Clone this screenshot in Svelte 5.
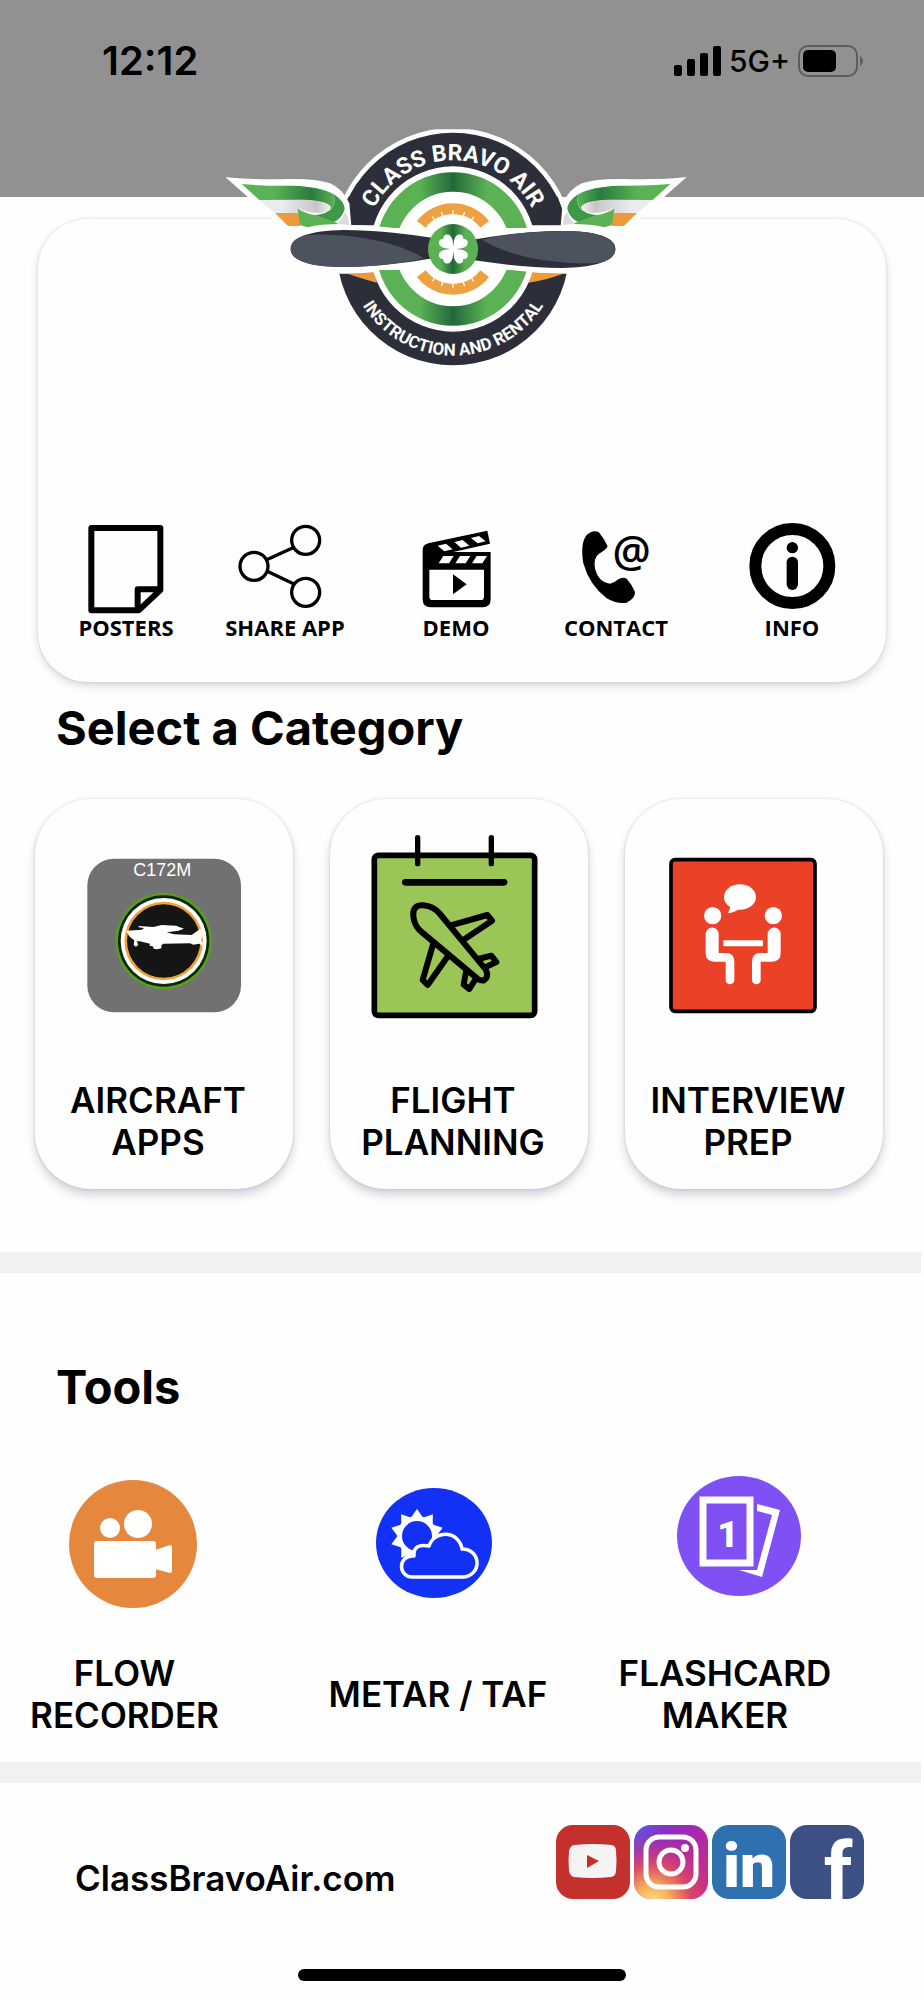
<script lang="ts">
  const website = 'ClassBravoAir.com'
</script>

<header class="status-bar">
  <time class="clock">12:12</time>
  <div class="status-icons">
    <svg width="47" height="30" viewBox="0 0 47 30" aria-hidden="true">
      <rect x="0" y="19" width="8" height="11" rx="2" />
      <rect x="13" y="13" width="8" height="17" rx="2" />
      <rect x="26" y="7" width="8" height="23" rx="2" />
      <rect x="39" y="0" width="8" height="30" rx="2" />
    </svg>
    <span class="network">5G+</span>
    <svg width="66" height="32" viewBox="0 0 66 32" aria-hidden="true">
      <rect x="1" y="1" width="58" height="30" rx="9" fill="none" stroke="#5c5c5c" stroke-width="2" />
      <rect x="5" y="5" width="33" height="22" rx="5" />
      <path d="M62 11q6 5 0 10z" fill="#5c5c5c" />
    </svg>
  </div>
</header>

<main>
  <section class="hero">
    <svg class="logo" viewBox="12 24 1428 720" role="img" aria-label="Class Bravo Air">
      <defs>
        <linearGradient id="ring" x1="0" x2="1">
          <stop offset="0.25" stop-color="#5bb254" />
          <stop offset="0.5" stop-color="#22683a" />
          <stop offset="0.75" stop-color="#5bb254" />
        </linearGradient>
        <linearGradient id="ribbon" x1="0" x2="1">
          <stop offset="0.35" stop-color="#5bb254" />
          <stop offset="0.75" stop-color="#2b7a41" />
          <stop offset="1" stop-color="#5bb254" />
        </linearGradient>
        <linearGradient id="silver" x1="0" x2="1">
          <stop offset="0.3" stop-color="#ececee" />
          <stop offset="0.8" stop-color="#c6c6c9" />
          <stop offset="1" stop-color="#f4f4f4" />
        </linearGradient>
        <clipPath id="top-edge"><rect x="0" y="28" width="1440" height="720" /></clipPath>
        <path id="arc-top" d="M433 387a266 266 0 0 1 532 0" />
        <path id="arc-bottom" d="M379 387a320 320 0 0 0 640 0" />
        <g id="wing">
          <path fill="#fff" d="M16 171Q90 180 210 177Q290 176 330 190Q368 206 388 250L396 340L240 330Q205 330 182 318Z" />
          <path fill="url(#ribbon)" d="M65 192Q140 199 220 197Q300 200 340 222Q350 250 332 268Q314 242 250 239L118 240Z" />
          <path fill="url(#silver)" d="M118 240H260Q325 243 333 262Q326 280 296 279Q262 277 238 266L236 279H165Z" />
          <path fill="#ec9a3c" d="M165 279H240V318H204Z" />
          <path fill="#3f9748" d="M340 221Q375 245 374 268Q365 300 335 308L282 286Q325 282 338 262Q348 245 340 221Z" />
          <path fill="#5bb254" d="M233 266Q258 281 290 286L360 312Q305 312 262 322L240 315Z" />
          <path fill="#dcdcde" d="M374 275Q388 290 387 315L350 311Q370 300 374 275Z" />
        </g>
        <g id="blade">
          <path fill="#2c2f39" d="M640 354C560 342 470 330 370 330C270 332 212 352 212 387C212 425 280 441 370 441C480 440 560 428 640 415Z" />
          <path fill="#4c535f" d="M250 348C300 340 350 344 400 350C500 362 570 388 612 415C550 430 470 440 370 441C280 441 212 425 212 387C212 368 225 356 250 348Z" />
        </g>
      </defs>
      <g clip-path="url(#top-edge)">
        <circle cx="699" cy="387" r="363" fill="#fff" />
        <circle cx="699" cy="387" r="349" fill="#2c2f39" />
      </g>
      <path fill="#fff" d="M330 313H1068V461H330Z" />
      <path fill="#2c2f39" d="M385 230L374 262L390 316H480V230ZM1013 230L1030 280L1023 316H930V230Z" />
      <path fill="#ec9a3c" d="M385 462L470 456V488Q425 476 385 462ZM1027 462L925 456V488Q975 482 1027 462Z" />
      <circle cx="699" cy="387" r="248" fill="#fff" />
      <circle cx="699" cy="387" r="201" fill="none" stroke="url(#ring)" stroke-width="59" />
      <path fill="none" stroke="#eda140" stroke-width="33" d="M604 313A120 120 0 0 1 794 313M604 461A120 120 0 0 0 794 461" />
      <path stroke="#fff" stroke-width="4" d="M637 290l8 13M664 276l5 14M699 270v14M734 276l-5 14M761 290l-8 13M637 484l8-13M664 498l5-14M699 504v-14M734 498l-5-14M761 484l-8-13" />
      <path fill="#fff" d="M470 324H930V450H470Z" />
      <use href="#wing" />
      <use href="#wing" transform="translate(1416 0) scale(-1 1)" />
      <g fill="none" stroke="#fff" stroke-width="30">
        <path d="M640 354C560 342 470 330 370 330C270 332 212 352 212 387C212 425 280 441 370 441C480 440 560 428 640 415" />
        <path transform="rotate(180 699 387)" d="M640 354C560 342 470 330 370 330C270 332 212 352 212 387C212 425 280 441 370 441C480 440 560 428 640 415" />
      </g>
      <use href="#blade" />
      <use href="#blade" transform="rotate(180 699 387)" />
      <circle cx="699" cy="387" r="75" fill="url(#ring)" />
      <g fill="#fff">
        {#each [45, 135, 225, 315] as angle}
          <path transform="translate(700 387) rotate({angle})" d="M0 2L-17 -20Q-28 -40 -13 -47Q-4 -49 0 -42Q4 -49 13 -47Q28 -40 17 -20Z" />
        {/each}
      </g>
      <text class="logo-name"><textPath href="#arc-top" startOffset="50%">CLASS BRAVO AIR</textPath></text>
      <text class="logo-sub"><textPath href="#arc-bottom" startOffset="50%">INSTRUCTION AND RENTAL</textPath></text>
    </svg>

    <nav class="shortcuts">
      <a href="#posters">
        <svg viewBox="54 69 288 270" aria-hidden="true">
          <path fill="none" stroke="#000" stroke-width="18" stroke-linejoin="round" d="M94 84H301V270L236 331H94ZM301 268H233V331" />
        </svg>
        POSTERS
      </a>
      <a href="#share">
        <svg viewBox="531 69 288 270" aria-hidden="true">
          <g fill="none" stroke="#000" stroke-width="10">
            <circle cx="582" cy="199" r="42" />
            <circle cx="737" cy="121" r="42" />
            <circle cx="737" cy="277" r="42" />
            <path d="M620 179L699 143M620 213L702 252" />
          </g>
        </svg>
        SHARE APP
      </a>
      <a href="#demo">
        <svg viewBox="1044 69 288 270" aria-hidden="true">
          <path d="M1088 150Q1088 134 1105 130L1282 92L1290 131L1180 156H1292V298Q1292 322 1268 322H1112Q1088 322 1088 298Z" />
          <g fill="#fff">
            <path d="M1108 209H1272V290Q1272 300 1262 300H1118Q1108 300 1108 290Z" />
            <path d="M1150 168H1181L1167 190H1136ZM1200 168H1231L1217 190H1186ZM1250 168H1281L1267 190H1236Z" />
            <path d="M1133 137L1158 131L1178 148L1153 154ZM1183 126L1208 120L1228 137L1203 143ZM1233 114L1257 108L1277 124L1253 130Z" />
          </g>
          <path d="M1179 223V283L1220 253Z" />
        </svg>
        DEMO
      </a>
      <a href="#contact">
        <svg viewBox="324 69 288 270" aria-hidden="true">
          <path d="M380 105Q398 88 416 96Q433 116 443 139Q440 148 416 162Q400 174 405 205Q414 246 450 251Q462 249 475 238Q488 230 500 236Q515 252 525 276Q526 294 500 308Q470 313 440 295Q388 255 370 190Q360 130 380 105Z" />
          <text class="at-sign" x="515" y="201">@</text>
        </svg>
        CONTACT
      </a>
      <a href="#info">
        <svg viewBox="852 69 288 270" aria-hidden="true">
          <circle cx="997" cy="198" r="111" fill="none" stroke="#000" stroke-width="36" />
          <circle cx="997" cy="143" r="17" />
          <rect x="980" y="170" width="34" height="100" rx="17" />
        </svg>
        INFO
      </a>
    </nav>
  </section>

  <h2>Select a Category</h2>
  <div class="categories">
    <button class="card">
      <svg viewBox="159 165 510 552" aria-hidden="true">
        <rect x="202" y="236" width="461" height="461" rx="80" fill="#717171" />
        <text class="model" x="427" y="288">C172M</text>
        <circle cx="431" cy="483" r="145" fill="#5e9926" />
        <circle cx="431" cy="483" r="137" fill="#0a2a0c" />
        <circle cx="431" cy="483" r="129" fill="#fff" />
        <circle cx="431" cy="483" r="118" fill="#f3a136" />
        <circle cx="431" cy="483" r="110" fill="#151515" />
        <path fill="#fff" d="M319 452L366 449L372 444L356 442V438L400 441L425 435L468 437L492 446L475 452L440 457L462 463L515 465L540 447L554 445L547 462L543 484L554 490L552 498L538 491L520 494L510 490L430 491L424 496V505L412 508L402 507L398 499L388 497L390 491L360 484L350 484L355 494L348 500L341 495L343 481Q325 470 319 452Z" />
      </svg>
      <span>AIRCRAFT<br />APPS</span>
    </button>
    <button class="card">
      <svg viewBox="144 165 510 552" aria-hidden="true">
        <rect x="163" y="226" width="481" height="480" rx="12" fill="#9bc557" stroke="#000" stroke-width="17" />
        <g fill="none" stroke="#000" stroke-linecap="round" stroke-linejoin="round">
          <path stroke-width="16" d="M293 173V251M514 173V251" />
          <path stroke-width="20" d="M256 307H552" />
          <path stroke-width="18" d="M280 408Q277 374 310 376Q340 378 360 402L497 568Q508 590 492 601Q484 604 472 596L300 452Q282 434 280 408ZM392 436L502 405L516 422L430 480M340 490L308 600L323 615L384 528M475 537L514 527L529 546L500 560M438 575L431 614L448 627L465 600" />
        </g>
      </svg>
      <span>FLIGHT<br />PLANNING</span>
    </button>
    <button class="card">
      <svg viewBox="159 165 510 552" aria-hidden="true">
        <rect x="183" y="239" width="432" height="455" rx="12" fill="#ea4127" stroke="#000" stroke-width="11" />
        <g fill="#fff">
          <ellipse cx="390" cy="351" rx="48" ry="38" />
          <path d="M361 374Q362 388 353 400Q374 399 390 385Z" />
          <rect x="340" y="481" width="119" height="18" rx="3" />
          <circle cx="308" cy="407" r="26" />
          <circle cx="490" cy="407" r="26" />
          <path d="M287 462a19 19 0 0 1 39 0V519H348Q373 519 373 545V600a13 13 0 0 1-26 0V545H312Q287 545 287 520Z" />
          <path d="M512 462a19 19 0 0 0-39 0V519H451Q426 519 426 545V600a13 13 0 0 0 26 0V545H487Q512 545 512 520Z" />
        </g>
      </svg>
      <span>INTERVIEW<br />PREP</span>
    </button>
  </div>

  <hr />

  <h2 class="tools-title">Tools</h2>
  <div class="tools">
    <button class="tool">
      <svg viewBox="47 1475 156 134" aria-hidden="true">
        <circle cx="133" cy="1544" r="64" fill="#e5873d" />
        <g fill="#fff">
          <circle cx="110" cy="1528" r="10" />
          <circle cx="138" cy="1524" r="14" />
          <rect x="94" y="1541" width="62" height="37" rx="3" />
          <path d="M155 1550L170 1545Q172 1545 172 1547V1571Q172 1573 170 1573L155 1569Z" />
        </g>
      </svg>
      <span>FLOW<br />RECORDER</span>
    </button>
    <button class="tool middle">
      <svg viewBox="360 1475 156 134" aria-hidden="true">
        <ellipse cx="434" cy="1543" rx="58" ry="55" fill="#1330f5" />
        <g fill="#fff">
          <circle cx="417" cy="1536" r="20" />
          {#each [0, 36, 72, 108, 144, 180, 216, 252, 288, 324] as angle}
            <path transform="rotate({angle} 417 1536)" d="M410 1519L417 1509L424 1519Z" />
          {/each}
        </g>
        <circle cx="417" cy="1536" r="15" fill="#1330f5" />
        <path fill="#1330f5" stroke="#fff" stroke-width="3.5" stroke-linejoin="round" d="M412 1577A10 10 0 0 1 412 1556H414Q413 1543 429 1546A17 17 0 0 1 462 1549A14 14 0 1 1 464 1577Z" />
      </svg>
      <span>METAR / TAF</span>
    </button>
    <button class="tool">
      <svg viewBox="647 1475 156 134" aria-hidden="true">
        <ellipse cx="739" cy="1536" rx="62" ry="60" fill="#7f50f4" />
        <rect x="703" y="1500" width="47" height="63" fill="none" stroke="#fff" stroke-width="7" />
        <path fill="#fff" d="M757 1504L780 1510L762 1577L739 1570L757 1570L772 1515L757 1511Z" />
        <text class="card-number" x="728" y="1547">1</text>
      </svg>
      <span>FLASHCARD<br />MAKER</span>
    </button>
  </div>

  <hr />
</main>

<footer>
  <div class="footer-row">
    <a class="website" href="https://classbravoair.com">{website}</a>
    <div class="social">
      <a href="#youtube" aria-label="YouTube">
        <svg viewBox="0 0 74 74">
          <rect width="74" height="74" rx="17" fill="#c4302b" />
          <path fill="#f4f4f4" d="M18 20Q37 18 56 20Q60 21 60 26Q61 36 60 46Q60 51 55 52Q37 54 18 52Q14 51 13 46Q12 36 13 26Q14 21 18 20Z" />
          <path fill="#c4302b" d="M31 30V43L43 36Z" />
        </svg>
      </a>
      <a href="#instagram" aria-label="Instagram">
        <svg viewBox="0 0 74 74">
          <defs>
            <linearGradient id="ig-base" x1="0" y1="0" x2="1" y2="0.6">
              <stop offset="0" stop-color="#5a5ae0" />
              <stop offset="0.35" stop-color="#8a2fc0" />
              <stop offset="0.6" stop-color="#a328b4" />
              <stop offset="1" stop-color="#c42c8c" />
            </linearGradient>
            <radialGradient id="ig-glow" cx="0.25" cy="1.05" r="0.95">
              <stop offset="0" stop-color="#fde08a" />
              <stop offset="0.25" stop-color="#f5b05a" />
              <stop offset="0.55" stop-color="#df4a5e" stop-opacity="0.9" />
              <stop offset="1" stop-color="#c42c8c" stop-opacity="0" />
            </radialGradient>
          </defs>
          <rect width="74" height="74" rx="17" fill="url(#ig-base)" />
          <rect width="74" height="74" rx="17" fill="url(#ig-glow)" />
          <g fill="none" stroke="#fff" stroke-width="5">
            <rect x="12" y="12" width="50" height="50" rx="13" />
            <circle cx="37" cy="37" r="12" />
          </g>
          <circle cx="51" cy="23" r="4" fill="#fff" />
        </svg>
      </a>
      <a href="#linkedin" aria-label="LinkedIn">
        <svg viewBox="0 0 74 74">
          <rect width="74" height="74" rx="17" fill="#2f70af" />
          <text class="linkedin-mark" x="37" y="62">in</text>
        </svg>
      </a>
      <a href="#facebook" aria-label="Facebook">
        <svg viewBox="0 0 74 74">
          <rect width="74" height="74" rx="17" fill="#3c5084" />
          <text class="facebook-mark" x="48" y="74">f</text>
        </svg>
      </a>
    </div>
  </div>
  <div class="home-indicator"></div>
</footer>

<style>
  :global(body) {
    margin: 0;
    background: #fefefe;
    color: #000;
    font-family: Inter, "Liberation Sans", sans-serif;
  }

  .status-bar {
    display: flex;
    justify-content: space-between;
    align-items: center;
    padding: 40px 60px 115px 102px;
    background: #919191;
    line-height: 42px;
  }

  .clock {
    font-size: 40px;
    font-weight: 600;
  }

  .status-icons {
    display: flex;
    align-items: center;
    gap: 8px;
  }

  .network {
    font-size: 30px;
    font-weight: 500;
  }

  .hero {
    display: flex;
    flex-direction: column;
    margin: 22px 38px 0;
    padding-bottom: 43px;
    border-radius: 50px;
    background: #fefefe;
    box-shadow: 0 4px 8px rgba(40, 30, 60, 0.16), 0 0 3px rgba(40, 30, 60, 0.14);
  }

  .logo {
    align-self: center;
    width: 476px;
    height: 240px;
    margin-top: -91px;
  }

  .logo text {
    fill: #fff;
    font-family: Roboto, "Liberation Sans", sans-serif;
    font-weight: 700;
    text-anchor: middle;
  }

  .logo-name {
    font-size: 69px;
  }

  .logo-sub {
    font-size: 51px;
  }

  .shortcuts {
    display: grid;
    grid-template-columns: 132fr 186fr 156fr 164fr 188fr;
    margin-top: 155px;
    padding-left: 22px;
  }

  .shortcuts a {
    display: flex;
    flex-direction: column;
    align-items: center;
    gap: 2px;
    color: #000;
    font-family: "Open Sans", "Noto Sans", sans-serif;
    font-size: 22px;
    font-weight: 700;
    line-height: 24px;
    text-decoration: none;
    white-space: nowrap;
  }

  .shortcuts svg {
    width: 96px;
    height: 90px;
    overflow: visible;
  }

  .at-sign {
    font-size: 128px;
    font-weight: 600;
    text-anchor: middle;
  }

  h2 {
    margin: 18px 56px 43px;
    font-size: 47px;
    font-weight: 700;
    line-height: 56px;
  }

  .tools-title {
    margin-top: 86px;
    margin-bottom: 60px;
  }

  button {
    border: none;
    background: none;
    color: inherit;
    font: inherit;
    cursor: pointer;
  }

  .categories {
    display: grid;
    grid-template-columns: repeat(3, 1fr);
    gap: 37px;
    padding: 0 41px 0 35px;
  }

  .card,
  .tool {
    display: flex;
    flex-direction: column;
    align-items: center;
    font-size: 35px;
    font-weight: 600;
    line-height: 42px;
    white-space: nowrap;
  }

  .card {
    gap: 60px;
    padding: 36px 12px 26px 0;
    border-radius: 56px;
    background: #fefefe;
    box-shadow: 0 6px 10px rgba(40, 30, 60, 0.2), 0 0 3px rgba(40, 30, 60, 0.16);
  }

  .card svg {
    width: 170px;
    height: 184px;
  }

  .model {
    fill: #fff;
    font-family: "Liberation Sans", sans-serif;
    font-size: 54px;
    font-weight: 400;
    text-anchor: middle;
  }

  hr {
    height: 21px;
    margin: 63px 3px 0 0;
    border: none;
    background: #f1f0f2;
  }

  .tools {
    display: grid;
    grid-template-columns: 249fr 368fr 216fr;
    padding-right: 91px;
  }

  .tool {
    gap: 43px;
    padding: 0;
  }

  .tool svg {
    width: 156px;
    height: 134px;
  }

  .tool span {
    display: flex;
    align-items: center;
    min-height: 84px;
  }

  .middle {
    padding-left: 10px;
  }

  .tools + hr {
    margin-top: 26px;
  }

  .card-number {
    fill: #fff;
    font-family: Roboto, sans-serif;
    font-size: 37px;
    font-weight: 900;
    text-anchor: middle;
  }

  .footer-row {
    display: flex;
    justify-content: space-between;
    align-items: flex-end;
    padding: 42px 60px 70px 75px;
  }

  .website {
    color: #000;
    font-size: 35px;
    font-weight: 600;
    line-height: 42px;
    text-decoration: none;
  }

  .social {
    display: flex;
    gap: 4px;
  }

  .social svg {
    display: block;
    width: 74px;
    height: 74px;
    overflow: visible;
  }

  .linkedin-mark,
  .facebook-mark {
    fill: #fff;
    font-family: Roboto, sans-serif;
    text-anchor: middle;
  }

  .linkedin-mark {
    font-size: 62px;
    font-weight: 900;
  }

  .facebook-mark {
    font-size: 80px;
    font-weight: 700;
  }

  .home-indicator {
    width: 328px;
    height: 12px;
    margin: 0 auto 19px;
    border-radius: 6px;
    background: #000;
  }
</style>
